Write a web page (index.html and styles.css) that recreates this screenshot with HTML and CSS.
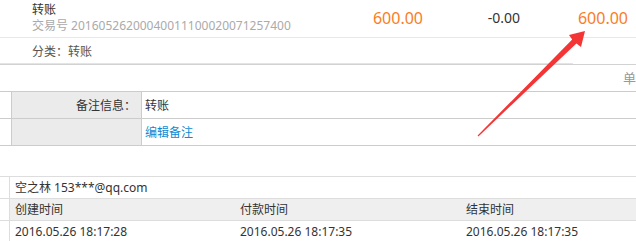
FILE: index.html
```html
<!DOCTYPE html>
<html lang="zh-CN">
<head>
<meta charset="utf-8">
<title>交易详情</title>
<link rel="stylesheet" href="styles.css">
</head>
<body>
<div class="page">
  <div class="trade">
    <div class="info">
      <div class="title">转账</div>
      <div class="tradeno">交易号 20160526200040011100020071257400</div>
    </div>
    <div class="amt amt-in">600.00</div>
    <div class="amt amt-out">-0.00</div>
    <div class="amt amt-bal">600.00</div>
  </div>
  <div class="category">分类：转账</div>
  <div class="divider"></div>
  <div class="unit-bar"><span class="unit">单位：元</span></div>
  <div class="memo">
    <div class="memo-row">
      <div class="gutter"></div>
      <div class="label">备注信息：</div>
      <div class="value">转账</div>
    </div>
    <div class="memo-row">
      <div class="gutter"></div>
      <div class="label"></div>
      <div class="value"><a class="link" href="#">编辑备注</a></div>
    </div>
  </div>
  <div class="spacer"></div>
  <div class="detail">
    <div class="d-row">
      <div class="d-gutter"></div>
      <div class="d-cell d-wide">空之林 153***@qq.com</div>
    </div>
    <div class="d-row d-head">
      <div class="d-gutter"></div>
      <div class="d-cell c1">创建时间</div>
      <div class="d-cell c2">付款时间</div>
      <div class="d-cell c3">结束时间</div>
    </div>
    <div class="d-row">
      <div class="d-gutter"></div>
      <div class="d-cell c1">2016.05.26 18:17:28</div>
      <div class="d-cell c2">2016.05.26 18:17:35</div>
      <div class="d-cell c3">2016.05.26 18:17:35</div>
    </div>
  </div>
  <svg class="arrow" width="636" height="241" viewBox="0 0 636 241">
    <polygon points="585,31 581,47 576.4,43.6 478.4,136.4 477.6,135.6 572.2,39.4 569,35" fill="#f43535"/>
  </svg>
</div>
</body>
</html>
```
FILE: styles.css
```css
html, body {
  margin: 0;
  padding: 0;
  background: #fff;
  overflow: hidden;
}
body {
  font-family: "Noto Sans", "Noto Sans CJK SC", sans-serif;
  font-size: 12px;
  color: #333;
}
.page {
  position: relative;
  width: 690px;
  height: 241px;
  overflow: hidden;
}

/* trade summary */
.trade {
  display: flex;
  align-items: flex-start;
  height: 37px;
  padding: 0 62px 0 32px;
  border-bottom: 1px solid #e8e8e8;
}
.info {
  flex: 1;
  padding-top: 2px;
  line-height: 16px;
}
.title { color: #333; }
.tradeno { color: #aaa; }
.amt {
  padding-top: 8px;
  line-height: 20px;
  text-align: right;
}
.amt-in { width: 100px; font-size: 16px; color: #fa7d26; }
.amt-out { width: 97px; font-size: 14px; color: #333; }
.amt-bal { width: 108px; font-size: 16px; color: #fa7d26; }

.category {
  height: 22px;
  padding: 3px 0 0 32px;
  line-height: 22px;
  color: #555;
}
.divider {
  height: 1px;
  width: 573px;
  background: #e4e4e4;
}
.unit-bar {
  height: 26px;
  border-top: 1px solid #d2d2d2;
  text-align: right;
  padding-right: 15px;
  line-height: 26px;
}
.unit {
  font-size: 13px;
  color: #999;
}

/* memo table */
.memo {
  border-top: 1px solid #ccc;
}
.memo-row {
  display: flex;
  height: 26px;
  border-bottom: 1px solid #ccc;
  line-height: 25px;
}
.gutter {
  width: 11px;
  border-right: 1px solid #ccc;
}
.label {
  width: 124px;
  padding: 1px 5px 0 0;
  background: #ebebeb;
  border-right: 1px solid #ccc;
  text-align: right;
}
.value {
  flex: 1;
  padding: 1px 0 0 3px;
}
.link {
  color: #0b8bd3;
  text-decoration: none;
}

.spacer { height: 30px; }

/* detail table */
.detail {
  border-top: 1px solid #ddd;
}
.d-row {
  display: flex;
  height: 21px;
  line-height: 21px;
  border-bottom: 1px solid #ddd;
}
.d-row:last-child { border-bottom: none; }
.d-head { background: #efefef; }
.d-gutter {
  width: 9px;
  border-right: 1px solid #ddd;
  background: #fff;
}
.d-cell {
  padding-left: 5px;
  color: #333;
}
.d-wide { flex: 1; }
.c1 { width: 220px; }
.c2 { width: 221px; }
.c3 { width: 221px; }

.arrow {
  position: absolute;
  left: 0;
  top: 0;
  pointer-events: none;
}
```
